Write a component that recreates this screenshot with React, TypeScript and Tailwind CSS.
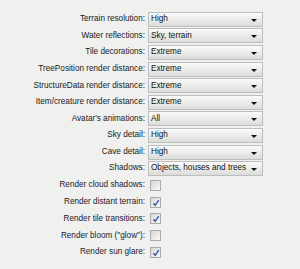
import React from "react";

const selects: [string, string][] = [
  ["Terrain resolution:", "High"],
  ["Water reflections:", "Sky, terrain"],
  ["Tile decorations:", "Extreme"],
  ["TreePosition render distance:", "Extreme"],
  ["StructureData render distance:", "Extreme"],
  ["Item/creature render distance:", "Extreme"],
  ["Avatar's animations:", "All"],
  ["Sky detail:", "High"],
  ["Cave detail:", "High"],
  ["Shadows:", "Objects, houses and trees"],
];

const checks: [string, boolean][] = [
  ["Render cloud shadows:", false],
  ["Render distant terrain:", true],
  ["Render tile transitions:", true],
  ["Render bloom (\"glow\"):", false],
  ["Render sun glare:", true],
];

function Select({ value }: { value: string }) {
  return (
    <div className="relative flex h-[15px] w-[115px] items-center border border-[#bdbdbb] bg-gradient-to-b from-[#fbfbfa] to-[#dcdcda] pl-[2px] text-[8.2px] text-[#111]">
      <span>{value}</span>
      <svg className="absolute right-[5px] top-[6px]" width="6" height="3" viewBox="0 0 6 3">
        <path d="M0 0H6L3 3Z" fill="#111" />
      </svg>
    </div>
  );
}

function Check({ on }: { on: boolean }) {
  return (
    <div className="relative h-[11px] w-[11px] border border-[#a9a9a7] bg-gradient-to-br from-[#d8d8d6] to-[#f8f8f6]">
      {on && (
        <svg className="absolute left-[1px] top-[1px]" width="8" height="8" viewBox="0 0 8 8">
          <path d="M1.5 4.2L3.2 6.3L6.8 1.2" stroke="#3456b0" strokeWidth="1.4" fill="none" />
        </svg>
      )}
    </div>
  );
}

export default function App() {
  return (
    <div
      className="h-[269px] w-[300px] bg-[#f0f0ee] pt-[11px] text-[#1a1a1a]"
      style={{ fontFamily: '"Liberation Sans", Arial, sans-serif' }}
    >
      <div className="grid grid-cols-[145px_115px] gap-x-[3px]">
        {selects.map(([l, v]) => (
          <React.Fragment key={l}>
            <div className="flex h-[16.6px] items-center justify-end text-[8.2px]">{l}</div>
            <div className="flex h-[16.6px] items-center">
              <Select value={v} />
            </div>
          </React.Fragment>
        ))}
        {checks.map(([l, c]) => (
          <React.Fragment key={l}>
            <div className="flex h-[16.8px] items-center justify-end text-[8.2px] text-[#1c2030]">{l}</div>
            <div className="flex h-[16.8px] items-center pl-[2px]">
              <Check on={c} />
            </div>
          </React.Fragment>
        ))}
      </div>
    </div>
  );
}
